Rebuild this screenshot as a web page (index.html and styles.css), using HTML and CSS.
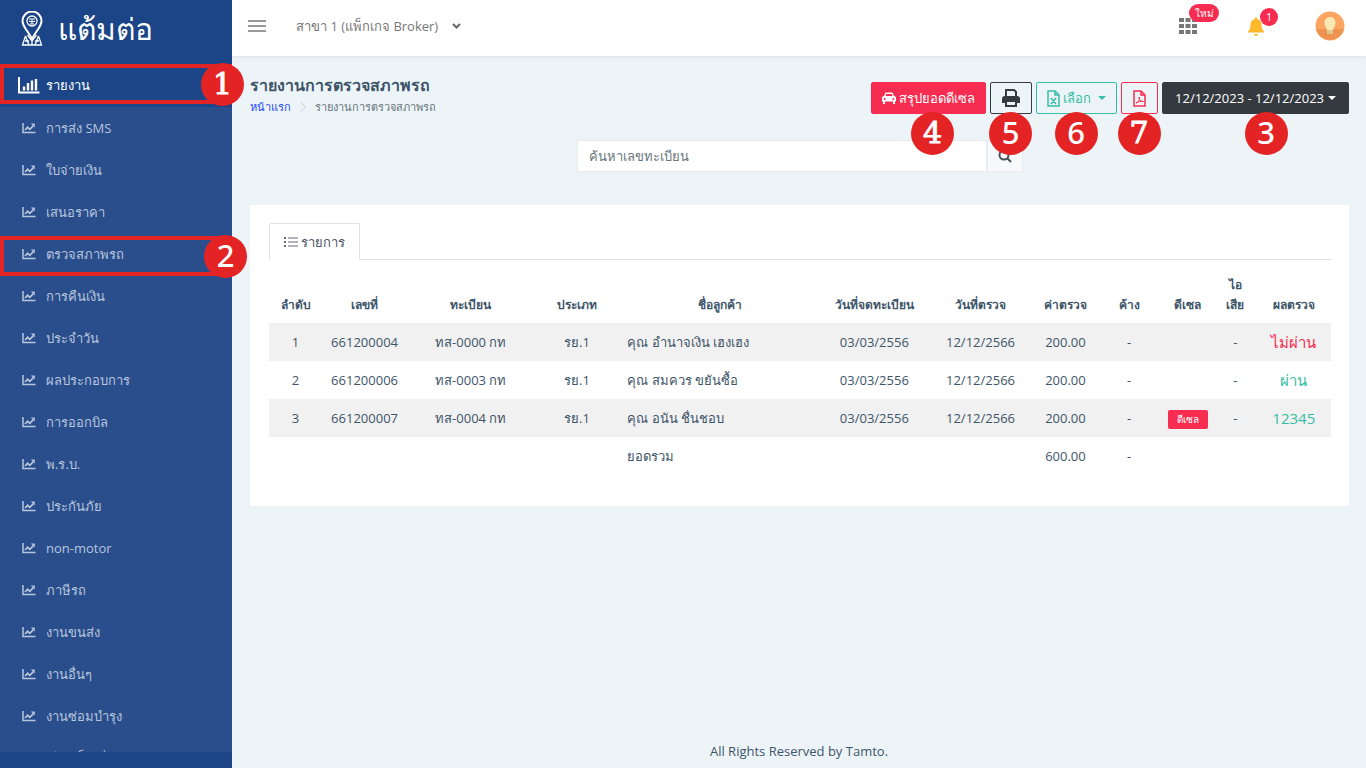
FILE: index.html
```html
<!DOCTYPE html>
<html lang="th">
<head>
<meta charset="utf-8">
<title>รายงานการตรวจสภาพรถ</title>
<meta name="viewport" content="width=device-width, initial-scale=1">
<link rel="stylesheet" href="styles.css">
</head>
<body>
<svg class="sprite" aria-hidden="true">
  <symbol id="chart" viewBox="0 0 14 12"><path d="M1 1v9.500h12.500" fill="none" stroke="currentColor" stroke-width="1.500"/><path d="M3 8l2.600-2.700 2.200 2 3.400-3.500" fill="none" stroke="currentColor" stroke-width="1.700"/><path d="M8.800 1.500h4v4z" fill="currentColor"/></symbol>
</svg>
<div class="app">
  <aside class="sidebar">
    <a class="brand" href="#">
      <svg width="22" height="36" viewBox="0 0 22 36" fill="none" stroke="#fff">
        <path d="M11 28C8 21 1.500 16 1.500 10a9.500 9.500 0 0 1 19 0C20.500 16 14 21 11 28z" stroke-width="2"/>
        <circle cx="11" cy="10" r="5" stroke-width="1.300"/>
        <path d="M8 8h6M8 10.500h6M9 13h4M11 8v5" stroke-width="1"/>
        <path d="M4.500 25L1.500 34h19L17.500 25M4.500 25l3.500 9M17.500 25L14 34M6.500 24l4.500 6 4.500-6M11 28v6M4 30h4M14 30h4" stroke-width="1.300"/>
      </svg>
      <span class="brand-name">แต้มต่อ</span>
    </a>
    <a class="section" href="#">
      <svg width="22" height="17" viewBox="0 0 22 17"><path d="M1 0v15.500h20.500" fill="none" stroke="#fff" stroke-width="2"/><path d="M6 9.500v4M10 6v7.500M14 3.500v10M18 2v11.500" stroke="#fff" stroke-width="2.400"/></svg>
      <span>รายงาน</span>
      <i class="frame"></i><b class="step step-slab step-side">1</b>
    </a>
    <nav class="menu">
      <a href="#"><svg><use href="#chart"/></svg>การส่ง SMS</a>
      <a href="#"><svg><use href="#chart"/></svg>ใบจ่ายเงิน</a>
      <a href="#"><svg><use href="#chart"/></svg>เสนอราคา</a>
      <a href="#"><svg><use href="#chart"/></svg>ตรวจสภาพรถ</a>
      <a href="#"><svg><use href="#chart"/></svg>การคืนเงิน</a>
      <a href="#"><svg><use href="#chart"/></svg>ประจำวัน</a>
      <a href="#"><svg><use href="#chart"/></svg>ผลประกอบการ</a>
      <a href="#"><svg><use href="#chart"/></svg>การออกบิล</a>
      <a href="#"><svg><use href="#chart"/></svg>พ.ร.บ.</a>
      <a href="#"><svg><use href="#chart"/></svg>ประกันภัย</a>
      <a href="#"><svg><use href="#chart"/></svg>non-motor</a>
      <a href="#"><svg><use href="#chart"/></svg>ภาษีรถ</a>
      <a href="#"><svg><use href="#chart"/></svg>งานขนส่ง</a>
      <a href="#"><svg><use href="#chart"/></svg>งานอื่นๆ</a>
      <a href="#"><svg><use href="#chart"/></svg>งานซ่อมบำรุง</a>
      <a href="#"><svg><use href="#chart"/></svg>เรียกเก็บเพิ่ม</a>
    </nav>
    <i class="frame frame-menu"></i><b class="step step-menu">2</b>
  </aside>
  <div class="page">
    <header class="topbar">
      <button class="plain" aria-label="เมนู"><svg width="18" height="12" viewBox="0 0 18 12"><path d="M0 1h18M0 6h18M0 11h18" stroke="#777" stroke-width="1.700"/></svg></button>
      <button class="plain branch">สาขา 1 (แพ็กเกจ Broker)<svg width="9" height="6" viewBox="0 0 9 6"><path d="M1 1l3.500 3.500L8 1" fill="none" stroke="#666" stroke-width="2"/></svg></button>
      <div class="tools">
        <button class="plain" aria-label="แอป"><svg width="18" height="16" viewBox="0 0 18 16" fill="#777"><path d="M0 0h5v4H0zM6.500 0h5v4h-5zM13 0h5v4h-5zM0 6h5v4H0zM6.500 6h5v4h-5zM13 6h5v4h-5zM0 12h5v4H0zM6.500 12h5v4h-5zM13 12h5v4h-5z"/></svg><span class="pill pill-new">ใหม่</span></button>
        <button class="plain" aria-label="แจ้งเตือน"><svg width="16" height="19" viewBox="0 0 16 19" fill="#fdb92c"><path d="M7 1a1 1 0 0 1 2 0v1c3 .5 4.500 3 4.500 5.500 0 4 1 5.500 2.500 7V15.500H0v-1c1.500-1.500 2.500-3 2.500-7C2.500 5 4 2.500 7 2zM6 17h4a2 2 0 0 1-4 0z"/></svg><span class="pill pill-count">1</span></button>
        <button class="plain" aria-label="บัญชี"><svg width="30" height="30" viewBox="0 0 30 30"><circle cx="15" cy="15" r="14.500" fill="#fca560"/><path d="M1 18h28a14.500 14.500 0 0 1-28 0z" fill="#ee934f"/><path d="M15 6c-3.500 0-5.500 2.500-5.500 6 0 3 2 4 2.500 7h6c.5-3 2.500-4 2.500-7 0-3.500-2-6-5.500-6z" fill="#fbe9b4"/><path d="M12 19h6v4h-6z" fill="#dcc68a"/></svg></button>
      </div>
    </header>
    <main class="content">
      <div class="heading">
        <div class="titles">
          <h1>รายงานการตรวจสภาพรถ</h1>
          <nav class="crumbs"><a href="#">หน้าแรก</a><svg width="6" height="10" viewBox="0 0 6 10"><path d="M1 0l4 5-4 5" fill="none" stroke="#ccd2d8"/></svg><span>รายงานการตรวจสภาพรถ</span></nav>
        </div>
        <div class="actions">
          <button class="btn red"><svg width="14" height="12" viewBox="0 0 14 12" fill="currentColor"><path fill-rule="evenodd" d="M3.500.5h7L12 4c1.300.3 2 1 2 2v3.500h-1V12h-2V9.500H3V12H1V9.500H0V6c0-1 .7-1.700 2-2zM4.200 2L3.500 4h7l-.7-2zM2.700 6a1 1 0 1 0 0 2 1 1 0 0 0 0-2zm8.600 0a1 1 0 1 0 0 2 1 1 0 0 0 0-2z"/></svg>สรุปยอดดีเซล<b class="step step-slab step-diesel">4</b></button>
          <button class="btn dark" aria-label="พิมพ์"><svg width="18" height="18" viewBox="0 0 18 18" fill="none" stroke="currentColor" stroke-width="2"><path d="M4 8V1h8l2 2v5"/><path d="M4 13H1V10q0-2 2-2h12q2 0 2 2v3h-3" fill="currentColor"/><path d="M4 12h10v5H4z" fill="#edf4f8"/></svg><b class="step">5</b></button>
          <button class="btn green"><svg width="13" height="17" viewBox="0 0 13 17" fill="none" stroke="currentColor" stroke-width="1.500"><path d="M1 1h7l4 4v11H1zM8 1v4h4M4 8l5 6M9 8l-5 6"/></svg>เลือก<span class="caret"></span><b class="step">6</b></button>
          <button class="btn pink" aria-label="PDF"><svg width="13" height="17" viewBox="0 0 13 17" fill="none" stroke="currentColor" stroke-width="1.500"><path d="M1 1h7l4 4v11H1zM8 1v4h4"/><path d="M3 13c3-1 4-4 3-6 0 3 2 5 4.500 4.500C8 10.500 5 12 3 13z" stroke-width="1"/></svg><b class="step step-slab">7</b></button>
          <button class="btn range">12/12/2023 - 12/12/2023<span class="caret"></span><b class="step step-range">3</b></button>
        </div>
      </div>
      <form class="search">
        <input type="text" aria-label="ค้นหาเลขทะเบียน" placeholder="ค้นหาเลขทะเบียน">
        <button type="button" aria-label="ค้นหา"><svg width="14" height="14" viewBox="0 0 14 14" fill="none" stroke="#44505c" stroke-width="2"><circle cx="6" cy="6" r="4.500"/><path d="M9 9l4 4"/></svg></button>
      </form>
      <section class="card">
        <div class="tabs"><button class="tab"><svg width="14" height="10" viewBox="0 0 14 10" stroke="#667"><path d="M0 1h2M0 5h2M0 9h2" stroke-width="2"/><path d="M4 1h10M4 5h10M4 9h10"/></svg>รายการ</button></div>
        <table>
          <colgroup><col class="c5"><col class="c8"><col class="c12"><col class="c8"><col class="c19"><col class="c10"><col class="c10"><col class="c6"><col class="c6"><col class="c5"><col class="c4"><col class="c7"></colgroup>
          <thead><tr><th>ลำดับ</th><th>เลขที่</th><th>ทะเบียน</th><th>ประเภท</th><th>ชื่อลูกค้า</th><th>วันที่จดทะเบียน</th><th>วันที่ตรวจ</th><th>ค่าตรวจ</th><th>ค้าง</th><th>ดีเซล</th><th>ไอ<br>เสีย</th><th>ผลตรวจ</th></tr></thead>
          <tbody>
            <tr><td>1</td><td>661200004</td><td>ทส-0000 กท</td><td>รย.1</td><td class="name">คุณ อำนาจเงิน เฮงเฮง</td><td>03/03/2556</td><td>12/12/2566</td><td>200.00</td><td>-</td><td></td><td>-</td><td class="result fail">ไม่ผ่าน</td></tr>
            <tr><td>2</td><td>661200006</td><td>ทส-0003 กท</td><td>รย.1</td><td class="name">คุณ สมควร ขยันซื้อ</td><td>03/03/2556</td><td>12/12/2566</td><td>200.00</td><td>-</td><td></td><td>-</td><td class="result">ผ่าน</td></tr>
            <tr><td>3</td><td>661200007</td><td>ทส-0004 กท</td><td>รย.1</td><td class="name">คุณ อนัน ชื่นชอบ</td><td>03/03/2556</td><td>12/12/2566</td><td>200.00</td><td>-</td><td><span class="tag">ดีเซล</span></td><td>-</td><td class="result">12345</td></tr>
          </tbody>
          <tfoot><tr><td></td><td></td><td></td><td></td><td class="name">ยอดรวม</td><td></td><td></td><td>600.00</td><td>-</td><td></td><td></td><td></td></tr></tfoot>
        </table>
      </section>
    </main>
    <footer class="footer">All Rights Reserved by Tamto.</footer>
  </div>
</div>
</body>
</html>
```
FILE: styles.css
```css
* { box-sizing: border-box; }
body { margin: 0; font: 13px/20px "Open Sans", "Noto Sans", sans-serif; color: #3e5569; background: #edf4f8; }
a { text-decoration: none; color: inherit; }
button, input { font: inherit; color: inherit; }
.sprite { display: none; }
.app { display: flex; height: 100vh; }

.sidebar { position: relative; width: 232px; flex: none; display: flex; flex-direction: column; padding-bottom: 16px; background: #1b4587; color: #fff; }
.brand { display: flex; align-items: center; gap: 15px; height: 57px; padding-left: 21px; }
.brand-name { font-size: 30px; line-height: 48px; }
.section { position: relative; display: flex; align-items: center; gap: 6px; height: 42px; margin-top: 8px; padding: 0 0 2px 18px; flex: none; }
.menu { flex: 1; min-height: 0; overflow: hidden; background: #2a4e8c; }
.menu a { display: flex; align-items: center; gap: 10px; height: 42px; padding-left: 22px; color: #b8c5dd; }
.menu svg { width: 14px; height: 12px; }
.frame { position: absolute; left: 0; right: 0; top: -1px; height: 40px; border: 4px solid #e42325; }
.frame-menu { top: 236px; }

.step { position: absolute; z-index: 2; left: 50%; top: 29px; width: 43px; height: 43px; margin-left: -22px; border-radius: 50%; background: #e42325; color: #fff; font: 500 31px/41px "Noto Sans", sans-serif; text-align: center; }
.step-slab { font: 400 30px/41px "DejaVu Serif", serif; -webkit-text-stroke: 1px #fff; }
.step-side { left: 223px; top: -2px; }
.step-menu { left: 226px; top: 235px; }
.step-diesel { left: 54%; }
.step-range { left: 56%; }

.page { flex: 1; min-width: 0; display: flex; flex-direction: column; }
.topbar { display: flex; align-items: center; height: 56px; flex: none; padding: 0 21px 4px 16px; background: #fff; box-shadow: 0 1px 3px #d9e1e8; }
.plain { position: relative; display: flex; align-items: center; border: 0; padding: 0; background: none; }
.branch { gap: 14px; margin-left: 30px; color: #777; }
.tools { display: flex; align-items: center; gap: 51px; margin-left: auto; }
.pill { position: absolute; border-radius: 9px; background: #f62d51; color: #fff; font-size: 10px; line-height: 18px; text-align: center; }
.pill-new { width: 30px; left: 10px; top: -14px; }
.pill-count { width: 18px; left: 12px; top: -9px; }

.content { padding: 18px 17px 0 18px; }
.heading { display: flex; justify-content: space-between; height: 66px; }
h1 { margin: 0; font-size: 16px; line-height: 22px; font-weight: 600; }
.crumbs { display: flex; align-items: center; gap: 9px; font-size: 11px; line-height: 22px; color: #67757c; }
.crumbs a { color: #2448f5; }
.actions { display: flex; gap: 4px; padding-top: 8px; }
.btn { position: relative; display: flex; align-items: center; justify-content: center; gap: 3px; height: 32px; padding: 0 11px; border: 1px solid; border-radius: 2px; background: none; white-space: nowrap; }
.red { padding: 0 10px; background: #f62d51; border-color: #f62d51; color: #fff; }
.dark { color: #343a40; }
.green { padding: 0 10px; color: #36bea6; }
.pink { color: #f62d51; }
.range { padding: 0 12px; gap: 4px; background: #343a40; border-color: #343a40; color: #fff; }
.caret { border: 4px solid transparent; border-top-color: currentColor; border-bottom: 0; }
.green .caret { margin-left: 4px; }

.search { display: flex; width: 446px; max-width: 100%; height: 32px; margin: 0 auto; }
.search input { flex: 1; min-width: 0; border: 1px solid #e9ecef; padding: 0 11px; background: #fff; }
.search input::placeholder { color: #67757c; opacity: 1; }
.search button { width: 36px; display: grid; place-items: center; padding: 0; border: 1px solid #e9ecef; background: #f8f9fa; }

.card { margin-top: 33px; padding: 18px 18px 31px 19px; background: #fff; }
.tabs { display: flex; border-bottom: 1px solid #dee2e6; }
.tab { display: flex; align-items: center; gap: 3px; height: 37px; margin-bottom: -1px; padding: 0 14px; border: 1px solid #dee2e6; border-bottom-color: #fff; border-radius: 2px 2px 0 0; background: #fff; color: #4d5567; }
table { width: 100%; margin-top: 7px; table-layout: fixed; border-collapse: collapse; text-align: center; }
th, td { padding: 8px 0; }
th { vertical-align: bottom; font-size: 12px; font-weight: 600; white-space: nowrap; }
td { height: 38px; white-space: nowrap; }
tbody tr:nth-child(odd) { background: #f1f1f1; }
.name { text-align: left; padding-left: 8px; }
.result { font-size: 15px; color: #36bea6; }
.fail { color: #f62d51; }
.tag { display: inline-block; padding: 0 9px; border-radius: 2px; background: #f62d51; color: #fff; font-size: 10px; line-height: 19px; }
.c4 { width: 4%; }
.c5 { width: 5%; }
.c6 { width: 6%; }
.c7 { width: 7%; }
.c8 { width: 8%; }
.c10 { width: 10%; }
.c12 { width: 12%; }
.c19 { width: 19%; }
.footer { margin-top: auto; padding: 7px 0; font-size: 13px; text-align: center; }
```
